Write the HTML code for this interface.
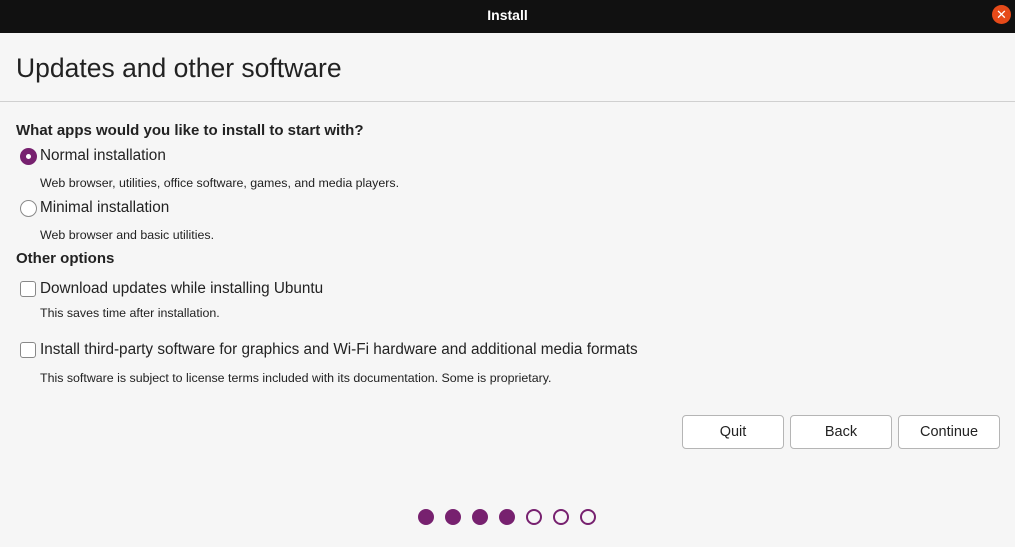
<!DOCTYPE html>
<html><head><meta charset="utf-8"><style>
*{margin:0;padding:0;box-sizing:border-box}
body{width:1015px;height:547px;background:#f6f6f6;font-family:"Liberation Sans",sans-serif;color:#222;position:relative;overflow:hidden}
.t{position:absolute;white-space:nowrap}
.bar{position:absolute;left:0;top:0;width:1015px;height:33px;background:#111;color:#fff;font-weight:bold;font-size:14px;text-align:center;line-height:31px}
.close{position:absolute;left:992px;top:5px;width:19px;height:19px;border-radius:50%;background:#e64a19;color:#fff;font-size:13px;line-height:19px;text-align:center}
.radio{position:absolute;width:17px;height:17px;border-radius:50%;border:1px solid #8a8a8a;background:#fff}
.radio.on{background:#77216f;border-color:#77216f}
.radio.on::after{content:"";position:absolute;left:5px;top:5px;width:5px;height:5px;border-radius:50%;background:#fff}
.cb{position:absolute;width:16px;height:16px;border:1px solid #888;border-radius:3px;background:#fff}
.btn{position:absolute;top:415px;height:34px;border:1px solid #b5b5b5;border-radius:4px;background:#fff;font-size:14.5px;text-align:center;line-height:32px}
.dot{position:absolute;top:509px;width:16px;height:16px;border-radius:50%;border:2px solid #77216f}
.dot.f{background:#77216f}
.d{font-size:12.4px}
.l{font-size:15.3px}
</style></head><body>
<div class="bar">Install</div>
<div class="close">✕</div>
<div class="t" style="left:16px;top:53px;font-size:26.5px;color:#222">Updates and other software</div>
<div style="position:absolute;left:0;top:101px;width:1015px;height:1px;background:#d0d0d0"></div>
<div class="t" style="left:16px;top:122px;font-size:15px;font-weight:bold">What apps would you like to install to start with?</div>
<div class="radio on" style="left:20px;top:148px"></div>
<div class="t l" style="left:40px;top:147px">Normal installation</div>
<div class="t d" style="left:40px;top:176px">Web browser, utilities, office software, games, and media players.</div>
<div class="radio" style="left:20px;top:200px"></div>
<div class="t l" style="left:40px;top:199px">Minimal installation</div>
<div class="t d" style="left:40px;top:228px">Web browser and basic utilities.</div>
<div class="t" style="left:16px;top:250px;font-size:15px;font-weight:bold">Other options</div>
<div class="cb" style="left:20px;top:281px"></div>
<div class="t l" style="left:40px;top:280px">Download updates while installing Ubuntu</div>
<div class="t d" style="left:40px;top:306px">This saves time after installation.</div>
<div class="cb" style="left:20px;top:342px"></div>
<div class="t l" style="left:40px;top:341px">Install third-party software for graphics and Wi-Fi hardware and additional media formats</div>
<div class="t d" style="left:40px;top:371px">This software is subject to license terms included with its documentation. Some is proprietary.</div>
<div class="btn" style="left:682px;width:102px">Quit</div>
<div class="btn" style="left:790px;width:102px">Back</div>
<div class="btn" style="left:898px;width:102px">Continue</div>
<div class="dot f" style="left:418px"></div>
<div class="dot f" style="left:445px"></div>
<div class="dot f" style="left:472px"></div>
<div class="dot f" style="left:499px"></div>
<div class="dot" style="left:526px"></div>
<div class="dot" style="left:553px"></div>
<div class="dot" style="left:580px"></div>
</body></html>
